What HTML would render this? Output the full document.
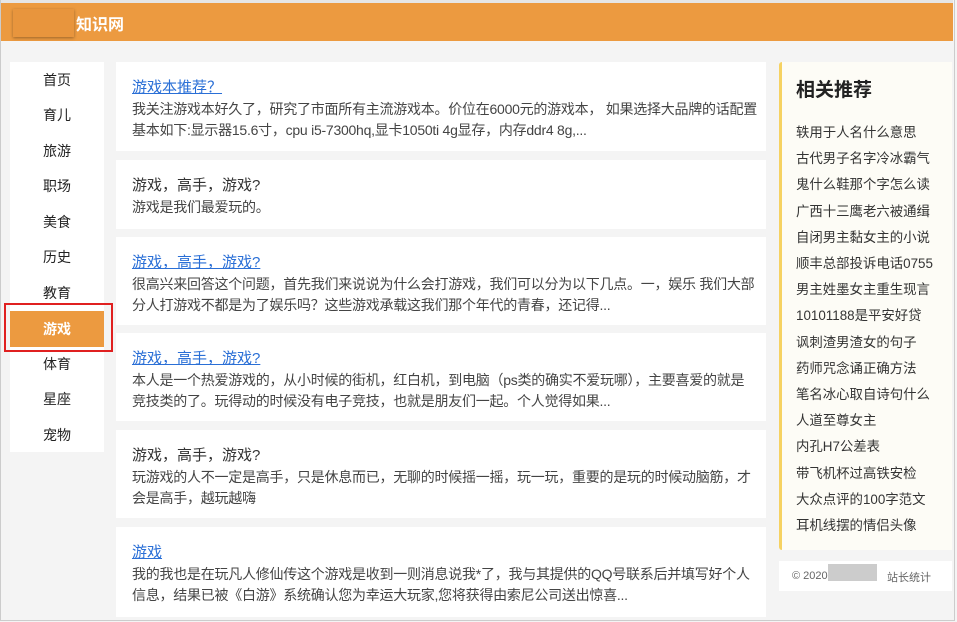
<!DOCTYPE html><html><head><meta charset="utf-8"><style>
*{margin:0;padding:0;box-sizing:border-box}
body{width:957px;height:622px;background:#f4f4f4;font-family:"Liberation Sans","Noto Sans CJK SC",sans-serif;position:relative;overflow:hidden;color:#333}
.frame{position:absolute;left:0;top:0;width:955px;height:621px;border:1px solid #ccc;border-top:none}
.hd{position:absolute;left:1px;top:0;width:952px;height:41px;background:#ec9a40;border-top:3px solid #e6e6e6}
.logo{position:absolute;left:12px;top:6px;width:61px;height:28px;background:#e8953d;box-shadow:0 1px 3px rgba(0,0,0,.35)}
.site{position:absolute;left:75px;top:8px;color:#fff;font-weight:bold;font-size:16px}
.nav{position:absolute;left:10px;top:62px;width:94px;height:390px;background:#fff}
.nav div{position:absolute;left:0;width:94px;text-align:center;font-size:14px;color:#222;line-height:20px}
.act{position:absolute;left:10px;top:311px;width:94px;height:36px;background:#ec9a40;color:#fff;font-size:14px;font-weight:bold;text-align:center;line-height:36px}
.red{position:absolute;left:4px;top:303px;width:109px;height:49px;border:2px solid #e02020}
.card{position:absolute;left:116px;width:650px;background:#fff;padding:15px 8px 0 16px;font-size:14px;line-height:21px}
.card a{color:#2a6fd6;text-decoration:underline;font-size:15px;display:block;line-height:22px}
.card .t{font-size:15px;color:#333;line-height:22px}
.card p{color:#444;letter-spacing:-0.25px}
.side{position:absolute;left:779px;top:62px;width:173px;height:488px;background:#fdfcf6;border-left:3px solid #f6d262;border-radius:3px 0 0 3px}
.side h3{position:absolute;left:14px;top:13px;font-size:19px;font-weight:bold;color:#222}
.side ul{position:absolute;left:14px;top:58px;list-style:none;font-size:13.4px;color:#333;line-height:26.2px;white-space:nowrap}
.ft{position:absolute;left:779px;top:561px;width:173px;height:30px;background:#fff;font-size:11px;color:#666}
</style></head><body>
<div class="frame"></div>
<div class="hd"><div class="logo"></div><div class="site">知识网</div></div>
<div class="nav">
<div style="top:8px">首页</div><div style="top:43px">育儿</div><div style="top:79px">旅游</div><div style="top:114px">职场</div><div style="top:150px">美食</div><div style="top:185px">历史</div><div style="top:221px">教育</div><div style="top:292px">体育</div><div style="top:327px">星座</div><div style="top:363px">宠物</div>
</div>
<div class="act">游戏</div><div class="red"></div>
<div class="card" style="top:62px;height:89px"><a>游戏本推荐？</a><p>我关注游戏本好久了，研究了市面所有主流游戏本。价位在6000元的游戏本， 如果选择大品牌的话配置基本如下:显示器15.6寸，cpu i5-7300hq,显卡1050ti 4g显存，内存ddr4 8g,...</p></div>
<div class="card" style="top:160px;height:69px"><div class="t">游戏，高手，游戏?</div><p>游戏是我们最爱玩的。</p></div>
<div class="card" style="top:237px;height:88px"><a>游戏，高手，游戏?</a><p>很高兴来回答这个问题，首先我们来说说为什么会打游戏，我们可以分为以下几点。一，娱乐 我们大部分人打游戏不都是为了娱乐吗？这些游戏承载这我们那个年代的青春，还记得...</p></div>
<div class="card" style="top:333px;height:88px"><a>游戏，高手，游戏?</a><p>本人是一个热爱游戏的，从小时候的街机，红白机，到电脑（ps类的确实不爱玩哪），主要喜爱的就是竞技类的了。玩得动的时候没有电子竞技，也就是朋友们一起。个人觉得如果...</p></div>
<div class="card" style="top:430px;height:88px"><div class="t">游戏，高手，游戏?</div><p>玩游戏的人不一定是高手，只是休息而已，无聊的时候摇一摇，玩一玩，重要的是玩的时候动脑筋，才会是高手，越玩越嗨</p></div>
<div class="card" style="top:527px;height:90px"><a>游戏</a><p>我的我也是在玩凡人修仙传这个游戏是收到一则消息说我*了，我与其提供的QQ号联系后并填写好个人信息，结果已被《白游》系统确认您为幸运大玩家,您将获得由索尼公司送出惊喜...</p></div>
<div class="side"><h3>相关推荐</h3><ul>
<li>轶用于人名什么意思</li><li>古代男子名字冷冰霸气</li><li>鬼什么鞋那个字怎么读</li><li>广西十三鹰老六被通缉</li><li>自闭男主黏女主的小说</li><li>顺丰总部投诉电话0755</li><li>男主姓墨女主重生现言</li><li>10101188是平安好贷</li><li>讽刺渣男渣女的句子</li><li>药师咒念诵正确方法</li><li>笔名冰心取自诗句什么</li><li>人道至尊女主</li><li>内孔H7公差表</li><li>带飞机杯过高铁安检</li><li>大众点评的100字范文</li><li>耳机线摆的情侣头像</li></ul></div>
<div class="ft"><span style="position:absolute;left:13px;top:9px">© 2020</span><span style="position:absolute;left:49px;top:3px;width:49px;height:17px;background:#ccc"></span><span style="position:absolute;left:108px;top:8px">站长统计</span></div>
</body></html>
